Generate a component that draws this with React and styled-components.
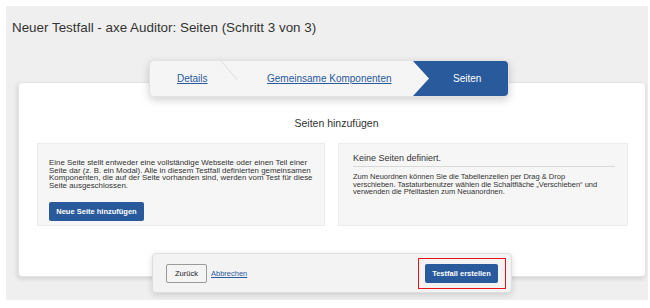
import React from 'react';
import styled, { createGlobalStyle } from 'styled-components';

const GlobalStyle = createGlobalStyle`
  html, body {
    margin: 0;
    padding: 0;
    background: #ffffff;
  }
  body {
    font-family: "Liberation Sans", Arial, sans-serif;
    color: #333333;
  }
`;

const BLUE = '#285a9c';

const Page = styled.div`
  margin: 6px 2px 0 6px;
  height: 294px;
  box-sizing: border-box;
  background: #efefef;
  padding: 0 0 7px 0;
  display: flex;
  flex-direction: column;
`;

const Title = styled.h1`
  margin: 0;
  padding: 14px 0 0 6px;
  height: 54px;
  box-sizing: border-box;
  font-size: 13.4px;
  font-weight: normal;
  color: #333333;
`;

const StepperRow = styled.div`
  display: flex;
  justify-content: center;
  position: relative;
  z-index: 2;
  padding-left: 4px;
`;

const Stepper = styled.nav`
  width: 360px;
  height: 37px;
  display: flex;
  background: #f5f5f5;
  border: 1px solid #e2e2e2;
  border-radius: 5px;
  overflow: hidden;
  box-shadow: 0 3px 8px rgba(0, 0, 0, 0.18);
  box-sizing: border-box;
`;

const Step = styled.div`
  position: relative;
  display: flex;
  align-items: center;
  box-sizing: border-box;
  width: ${p => p.$width}px;
  padding-left: ${p => p.$pad}px;
  font-size: 10px;
  ${p => p.$active && `
    background: ${BLUE};
    color: #ffffff;
    clip-path: polygon(0 0, 100% 0, 100% 100%, 0 100%, 16px 50%);
    padding-left: 40px;
    flex: 1;
  `}
`;

const StepLink = styled.a`
  color: ${BLUE};
  text-decoration: underline;
`;

const Divider = styled.svg`
  position: absolute;
  right: -8px;
  top: 0;
`;

const Card = styled.section`
  margin: -15px 0 0 12px;
  width: 628px;
  height: 195px;
  box-sizing: border-box;
  background: #ffffff;
  border: 1px solid #e3e3e3;
  border-radius: 4px;
  box-shadow: -1px 2px 4px rgba(0, 0, 0, 0.12);
  padding: 34px 17px 0 18px;
`;

const CardHeading = styled.h2`
  margin: 0 0 14px 0;
  text-align: center;
  font-size: 10.5px;
  font-weight: normal;
  color: #333333;
  padding-left: 8px;
`;

const Columns = styled.div`
  display: grid;
  grid-template-columns: 288px 290px;
  column-gap: 13px;
`;

const Panel = styled.div`
  height: 83px;
  box-sizing: border-box;
  background: #f6f6f6;
  border: 1px solid #ececec;
  padding: ${p => p.$pad};
`;

const SmallText = styled.p`
  margin: 0;
  font-size: ${p => p.$size || 7.5}px;
  line-height: 7.6px;
  color: #333333;
  white-space: nowrap;
`;

const PrimaryButton = styled.button`
  font-family: "Liberation Sans", Arial, sans-serif;
  background: ${BLUE};
  color: #ffffff;
  border: none;
  border-radius: 2px;
  font-size: 7.5px;
  font-weight: bold;
  height: 19px;
  width: ${p => p.$width}px;
  padding: 0;
  cursor: pointer;
`;

const LeftText = styled(SmallText)`
  margin-bottom: 11px;
`;

const PanelTitle = styled.h3`
  margin: 0;
  font-size: 9px;
  font-weight: normal;
  color: #333333;
  padding-bottom: 3px;
  border-bottom: 1px solid #d8d8d8;
  margin-bottom: 6px;
`;

const Footer = styled.footer`
  position: relative;
  z-index: 2;
  margin: -24px 0 0 146px;
  width: 360px;
  height: 40px;
  box-sizing: border-box;
  background: #f3f3f3;
  border: 1px solid #dedede;
  border-radius: 4px;
  box-shadow: 0 2px 6px rgba(0, 0, 0, 0.15);
  display: flex;
  align-items: center;
  justify-content: space-between;
  padding: 0 5px 0 13px;
`;

const FooterGroup = styled.div`
  display: flex;
  align-items: center;
  gap: 4px;
`;

const SecondaryButton = styled.button`
  font-family: "Liberation Sans", Arial, sans-serif;
  background: #f4f4f4;
  border: 1px solid #9a9a9a;
  border-radius: 2px;
  height: 19px;
  width: 41px;
  padding: 0;
  font-size: 7.5px;
  color: #222222;
`;

const TextLink = styled.a`
  font-size: 7.5px;
  color: ${BLUE};
  text-decoration: underline;
`;

const Highlight = styled.div`
  border: 1.5px solid #e8141a;
  padding: 5px 7px 5px 6px;
  display: flex;
`;

export default function App() {
  return (
    <>
      <GlobalStyle />
      <Page>
        <Title>Neuer Testfall - axe Auditor: Seiten (Schritt 3 von 3)</Title>
        <StepperRow>
          <Stepper>
            <Step $width={80} $pad={27}>
              <StepLink href="#">Details</StepLink>
              <Divider width="18" height="37" viewBox="0 0 18 37">
                <polyline points="1,0 17,18.5" fill="none" stroke="#dcdcdc" strokeWidth="1" />
              </Divider>
            </Step>
            <Step $width={183} $pad={37}>
              <StepLink href="#">Gemeinsame Komponenten</StepLink>
            </Step>
            <Step $active>Seiten</Step>
          </Stepper>
        </StepperRow>
        <Card>
          <CardHeading>Seiten hinzufügen</CardHeading>
          <Columns>
            <Panel $pad="15px 10px 0 11px">
              <LeftText $size={7.9}>
                Eine Seite stellt entweder eine vollständige Webseite oder einen Teil einer<br />
                Seite dar (z. B. ein Modal). Alle in diesem Testfall definierten gemeinsamen<br />
                Komponenten, die auf der Seite vorhanden sind, werden vom Test für diese<br />
                Seite ausgeschlossen.
              </LeftText>
              <PrimaryButton $width={95}>Neue Seite hinzufügen</PrimaryButton>
            </Panel>
            <Panel $pad="9px 12px 0 14px">
              <PanelTitle>Keine Seiten definiert.</PanelTitle>
              <SmallText>
                Zum Neuordnen können Sie die Tabellenzeilen per Drag &amp; Drop<br />
                verschieben. Tastaturbenutzer wählen die Schaltfläche „Verschieben“ und<br />
                verwenden die Pfeiltasten zum Neuanordnen.
              </SmallText>
            </Panel>
          </Columns>
        </Card>
        <Footer>
          <FooterGroup>
            <SecondaryButton>Zurück</SecondaryButton>
            <TextLink href="#">Abbrechen</TextLink>
          </FooterGroup>
          <Highlight>
            <PrimaryButton $width={73}>Testfall erstellen</PrimaryButton>
          </Highlight>
        </Footer>
      </Page>
    </>
  );
}
